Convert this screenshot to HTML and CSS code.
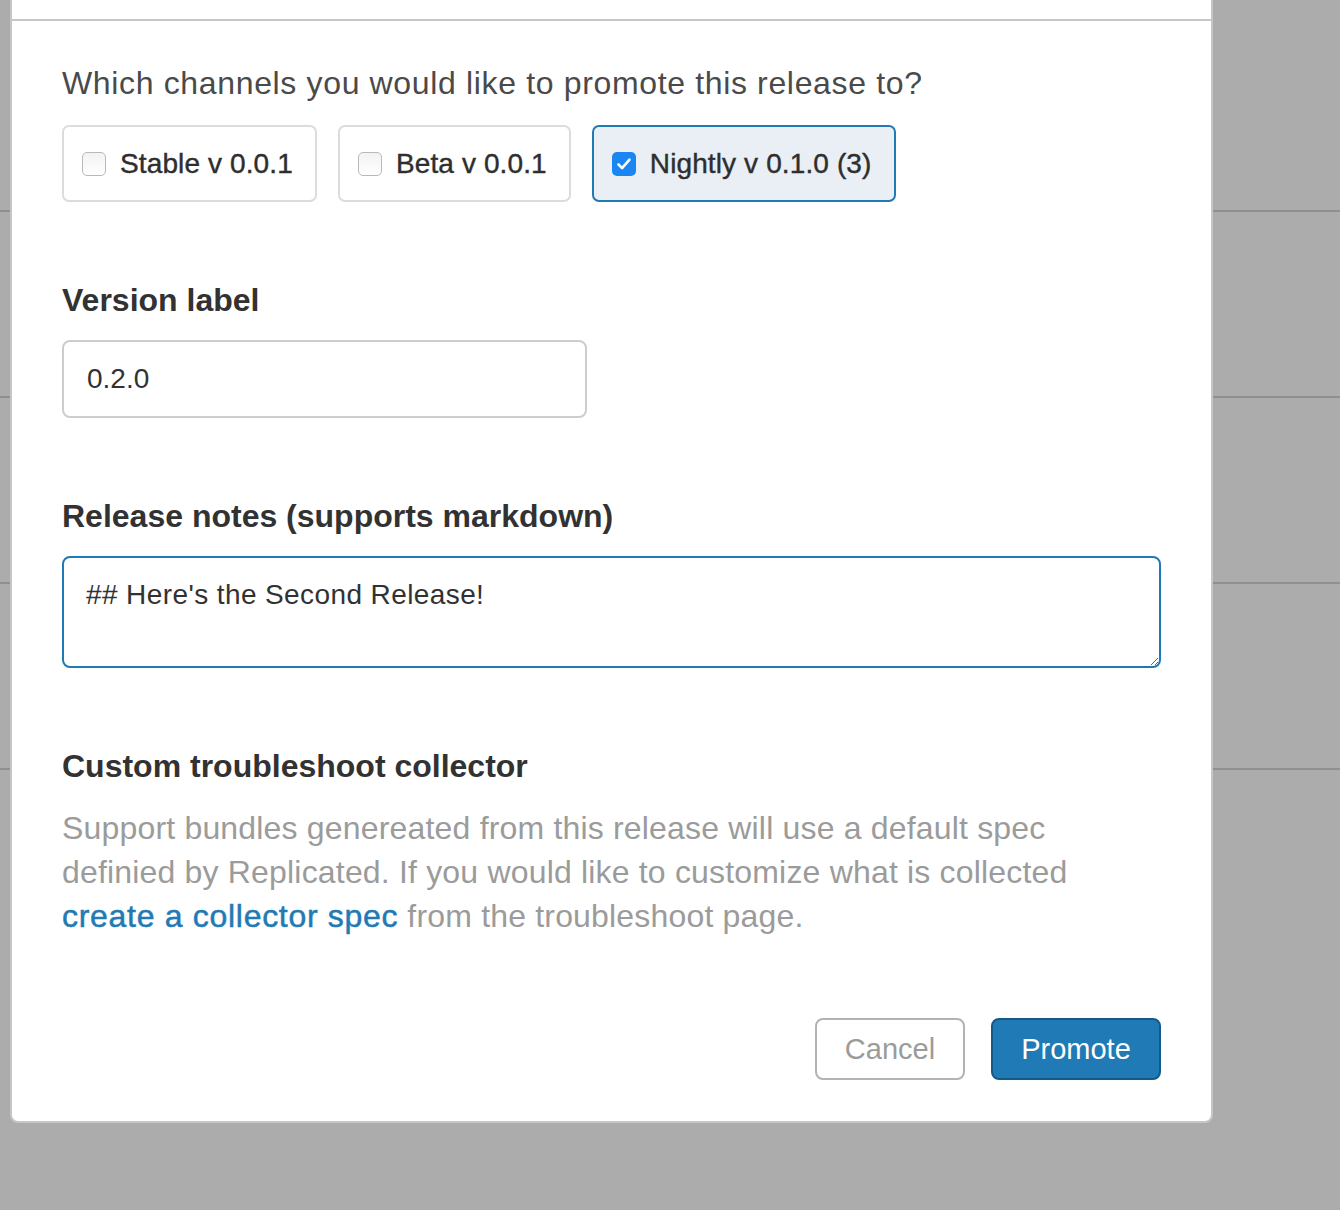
FILE: index.html
```html
<!DOCTYPE html>
<html lang="en">
<head>
<meta charset="utf-8">
<title>Promote release</title>
<link rel="stylesheet" href="styles.css">
</head>
<body>
<div class="page">
  <div class="page-row"></div>
  <div class="page-row"></div>
  <div class="page-row"></div>
  <div class="page-row"></div>
</div>

<div class="modal">
  <div class="modal-header"></div>
  <div class="modal-body">
    <p class="question">Which channels you would like to promote this release to?</p>
    <div class="channels">
      <label class="channel">
        <span class="check"></span>
        <span class="channel-name">Stable v 0.0.1</span>
      </label>
      <label class="channel">
        <span class="check"></span>
        <span class="channel-name">Beta v 0.0.1</span>
      </label>
      <label class="channel is-selected">
        <span class="check is-checked">
          <svg viewBox="0 0 24 24" width="24" height="24"><path d="M6.5 12.5l3.6 3.6 7.4-8.4" fill="none" stroke="#fff" stroke-width="2.6" stroke-linecap="round" stroke-linejoin="round"/></svg>
        </span>
        <span class="channel-name">Nightly v 0.1.0 (3)</span>
      </label>
    </div>

    <h3 class="field-label">Version label</h3>
    <div class="text-input">0.2.0</div>

    <h3 class="field-label">Release notes (supports markdown)</h3>
    <textarea class="notes">## Here's the Second Release!</textarea>

    <h3 class="field-label">Custom troubleshoot collector</h3>
    <p class="help">Support bundles genereated from this release will use a default spec definied by Replicated. If you would like to customize what is collected <a class="link" href="#">create a collector spec</a> from the troubleshoot page.</p>

    <div class="actions">
      <button class="btn btn-cancel" type="button">Cancel</button>
      <button class="btn btn-primary" type="button">Promote</button>
    </div>
  </div>
</div>
</body>
</html>
```

FILE: styles.css
```css
* { box-sizing: border-box; }

html, body {
  margin: 0;
  padding: 0;
}

body {
  background: #acacac;
  font-family: "Liberation Sans", Arial, sans-serif;
  width: 1340px;
  height: 1210px;
  overflow: hidden;
  position: relative;
}

.page {
  padding-top: 26px;
}

.page-row {
  height: 186px;
  border-bottom: 2px solid #8f8f8f;
}

.modal {
  position: absolute;
  left: 10px;
  top: -58px;
  width: 1203px;
  background: #fff;
  border: 2px solid #c4c6c9;
  border-radius: 8px;
}

.modal-header {
  height: 77px;
  border-bottom: 2px solid #c4c6c9;
}

.modal-body {
  padding: 44px 50px 41px 50px;
}

.question {
  margin: 0;
  font-size: 32px;
  line-height: 36px;
  letter-spacing: 0.65px;
  color: #4a4a4a;
}

.channels {
  display: flex;
  gap: 21px;
  margin-top: 24px;
}

.channel {
  display: flex;
  align-items: center;
  height: 77px;
  padding: 0 22px 0 18px;
  border: 2px solid #dcdcdc;
  border-radius: 7px;
  background: #fff;
}

.channel.is-selected {
  border-color: #1f7ab5;
  background: #e9eff5;
}

.check {
  width: 24px;
  height: 24px;
  border: 1.5px solid #b9b9b9;
  border-radius: 5px;
  background: linear-gradient(#f2f2f2, #fff);
  flex: none;
  margin-right: 14px;
  display: flex;
}

.check.is-checked {
  border: none;
  background: #1a86f2;
}

.channel-name {
  font-size: 28px;
  letter-spacing: 0.12px;
  color: #2e2e2e;
  -webkit-text-stroke: 0.4px #2e2e2e;
}

.field-label {
  margin: 80px 0 0;
  font-size: 32px;
  line-height: 36px;
  font-weight: bold;
  color: #323232;
}

.text-input {
  margin-top: 22px;
  width: 525px;
  height: 78px;
  border: 2px solid #cdcdcd;
  border-radius: 8px;
  padding: 0 0 0 23px;
  display: flex;
  align-items: center;
  font-size: 28px;
  color: #323232;
}

.notes {
  display: block;
  margin-top: 22px;
  width: 1099px;
  height: 112px;
  border: 2px solid #1f7ab5;
  border-radius: 8px;
  padding: 19px 22px;
  font-family: "Liberation Sans", Arial, sans-serif;
  font-size: 28px;
  line-height: 36px;
  letter-spacing: 0.4px;
  color: #323232;
  outline: none;
  resize: vertical;
}

.help {
  margin: 22px 0 0;
  font-size: 32px;
  line-height: 44px;
  letter-spacing: 0.18px;
  color: #9b9b9b;
  max-width: 1070px;
}

.link {
  color: #1f7ab5;
  text-decoration: none;
  letter-spacing: 0.7px;
  -webkit-text-stroke: 0.5px #1f7ab5;
}

.actions {
  display: flex;
  justify-content: flex-end;
  gap: 26px;
  margin-top: 80px;
}

.btn {
  height: 62px;
  border-radius: 8px;
  font-family: "Liberation Sans", Arial, sans-serif;
  font-size: 29px;
  padding: 0;
  cursor: pointer;
}

.btn-cancel {
  width: 150px;
  background: #fff;
  border: 2px solid #b3b3b3;
  color: #9b9b9b;
}

.btn-primary {
  width: 170px;
  background: #1f7ab5;
  border: 2px solid #155a87;
  color: #fff;
}
```
